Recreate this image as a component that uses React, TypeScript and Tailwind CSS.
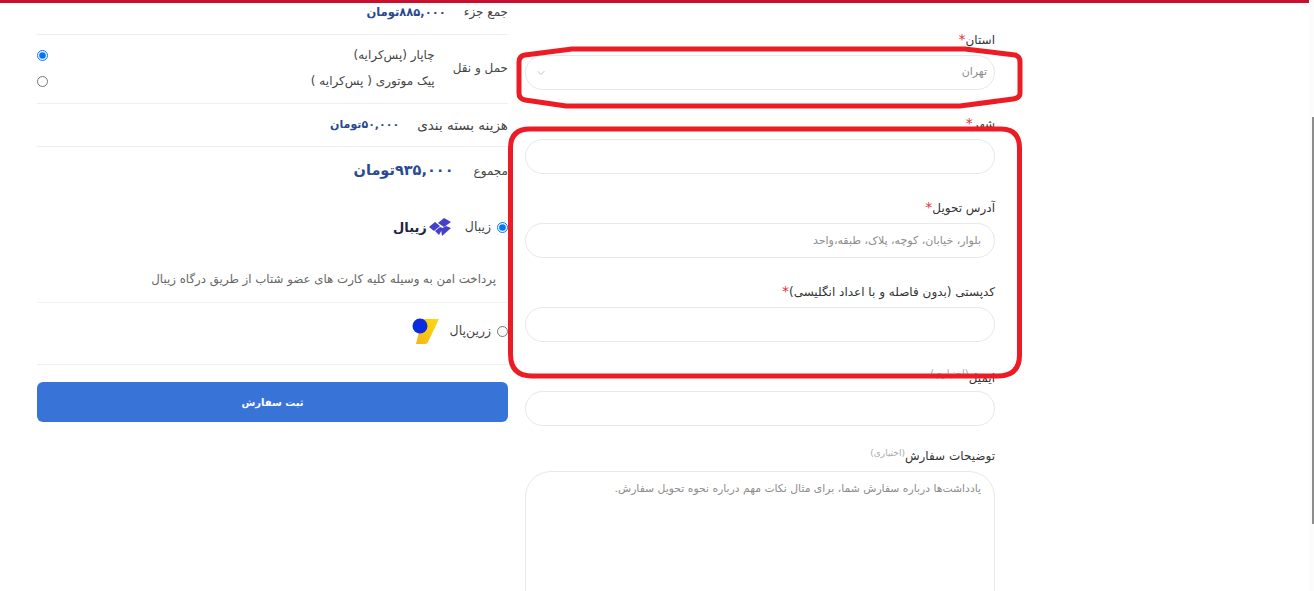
import React from 'react';
import { ChevronDown } from 'lucide-react';

const fontStack = { fontFamily: '"DejaVu Sans", "Noto Sans", sans-serif' };

const Req = () => <span className="text-[#d9343f] text-[14px] leading-none">*</span>;

const Field: React.FC<{ label: React.ReactNode; placeholder?: string; gap?: string }> = ({ label, placeholder, gap = 'mb-[24px]' }) => (
  <div className={gap}>
    <label className="block h-[25px] text-[12px] leading-[20px] text-[#333]">{label}</label>
    <input
      readOnly
      placeholder={placeholder}
      className="block h-[35px] w-full rounded-full border border-[#e8e8e8] bg-white pl-4 pr-[13px] text-[11px] outline-none placeholder:text-[#8c8c8c]"
    />
  </div>
);

const ZibalLogo = () => (
  <div className="flex items-center gap-[1px]">
    <svg width="24" height="20" viewBox="0 0 24 20" className="block">
      <g fill="#4340c9">
        <path d="M10 6 L16 1 L23 5 L16 10 Z" />
        <path d="M1 10 L7 5 L12 9 L6 14 Z" />
        <path d="M13 12 L18 9 L23 11 L14 19 Z" />
        <path d="M7 14 L12 10 L15 11 L11 18 Z" />
      </g>
    </svg>
    <span className="text-[13px] font-bold leading-none text-[#1c2540]">زیبال</span>
  </div>
);

const ZarinLogo = () => (
  <svg width="28" height="27" viewBox="0 0 28 27" className="block">
    <defs>
      <linearGradient id="zarin" x1="0" y1="1" x2="1" y2="0">
        <stop offset="0" stopColor="#f3b61c" />
        <stop offset="1" stopColor="#ffd90f" />
      </linearGradient>
    </defs>
    <path d="M10 1 H27 L16 24 Q15.500 26 13 26 H4 Z" fill="url(#zarin)" />
    <circle cx="8" cy="8" r="7.500" fill="#0a2be0" />
  </svg>
);

export default function App() {
  return (
    <div className="flex h-[591px] w-[1314px] overflow-hidden bg-white relative" style={fontStack}>
      <main dir="rtl" className="w-[1309px]">
        <div className="h-[3px] bg-[#c8102e]" />
        <div className="flex gap-[17px] pr-[314px] pl-[37px]">
          {/* Checkout form */}
          <div className="w-[470px] shrink-0 pt-[27px]">
            <div className="mb-[24px]">
              <label className="block h-[25px] text-[12px] leading-[20px] text-[#333]">استان<Req /></label>
              <div className="flex h-[35px] items-center justify-between rounded-full border border-[#e8e8e8] pl-[9px] pr-[7px] text-[11px] text-[#8c8c8c]">
                <span>تهران</span>
                <ChevronDown className="h-3 w-3 text-[#aaa]" strokeWidth={1.5} />
              </div>
            </div>
            <Field label={<>شهر<Req /></>} />
            <Field label={<>آدرس تحویل<Req /></>} placeholder="بلوار، خیابان، کوچه، پلاک، طبقه،واحد" />
            <Field label={<>کدپستی (بدون فاصله و با اعداد انگلیسی)<Req /></>} />
            <Field label={<span className="block pt-[2px]">ایمیل<sup className="text-[10px] text-[#aaa]">(اختیاری)</sup></span>} gap="mb-[20px]" />
            <label className="block h-[25px] text-[12px] leading-[20px] text-[#333]">
              توضیحات سفارش<sup className="text-[9px] text-[#aaa]">(اختیاری)</sup>
            </label>
            <textarea
              readOnly
              placeholder="یادداشت‌ها درباره سفارش شما، برای مثال نکات مهم درباره نحوه تحویل سفارش."
              className="block h-[200px] w-full resize-none rounded-[26px] border border-[#e8e8e8] px-[13px] py-[9px] text-[10.800px] outline-none placeholder:text-[#8c8c8c]"
            />
          </div>

          {/* Order summary */}
          <div className="w-[471px] shrink-0 text-[12px] text-[#444]">
            <div className="flex h-[32px] gap-[18px] border-b border-[#eee] pb-3">
              <span className="leading-[18px]">جمع جزء</span>
              <span className="text-[11.500px] font-bold leading-[18px] text-[#2a4a8f]">۸۸۵,۰۰۰تومان</span>
            </div>
            <div className="flex h-[69px] items-center gap-[18px] border-b border-[#eee]">
              <span className="pb-[2px]">حمل و نقل</span>
              <div className="flex-1 pb-[2px]">
                <div className="flex h-[26px] items-center justify-between">
                  <span>چاپار (پس‌کرایه)</span>
                  <input type="radio" name="ship" defaultChecked className="m-0 h-[11px] w-[11px]" />
                </div>
                <div className="flex h-[26px] items-center justify-between">
                  <span>پیک موتوری ( پس‌کرایه )</span>
                  <input type="radio" name="ship" className="m-0 h-[11px] w-[11px]" />
                </div>
              </div>
            </div>
            <div className="flex h-[43px] items-center gap-[18px] border-b border-[#eee]">
              <span className="text-[13.500px]">هزینه بسته بندی</span>
              <span className="text-[11px] font-bold text-[#2a4a8f]">۵۰,۰۰۰تومان</span>
            </div>
            <div className="flex h-[48px] items-center gap-[20px]">
              <span>مجموع</span>
              <span className="text-[14.500px] font-bold text-[#2a4a8f]">۹۳۵,۰۰۰تومان</span>
            </div>
            <div className="mt-[20px] flex h-[24px] items-center gap-[13px]">
              <div className="flex items-center gap-[6px]">
                <input type="radio" name="pay" defaultChecked className="m-0 h-[11px] w-[11px]" />
                <span className="text-[12.500px]">زیبال</span>
              </div>
              <ZibalLogo />
            </div>
            <div className="flex h-[64px] items-end border-b border-[#f3f3f3] pb-[13px] pr-[12px] text-[11.800px] text-[#666]">
              پرداخت امن به وسیله کلیه کارت های عضو شتاب از طریق درگاه زیبال
            </div>
            <div className="flex h-[62px] items-center gap-[10px] border-b border-[#eee] pb-[5px]">
              <div className="flex items-center gap-[6px]">
                <input type="radio" name="pay" className="m-0 h-[11px] w-[11px]" />
                <span className="text-[12.500px]">زرین‌پال</span>
              </div>
              <ZarinLogo />
            </div>
            <button className="mt-[17px] h-[40px] w-full rounded-md bg-[#3874d8] text-[10px] font-bold text-white">ثبت سفارش</button>
          </div>
        </div>
      </main>

      <aside className="w-[5px] bg-[#fcfcfc] pt-[117px] pl-[3px]">
        <div className="h-[407px] w-[2px] bg-[#8d8d8d]" />
      </aside>

      {/* Hand-drawn review marks on the screenshot */}
      <svg className="pointer-events-none absolute left-0 top-0" width="1314" height="591" fill="none" stroke="#ed1c24" strokeWidth="5">
        <path d="M572 49 H965 L1015 55 Q1020 56 1020 62 V93 Q1020 98 1013 99 L960 106 H566 L525 100 Q519 99 519 93 V62 Q519 56 525 55 Z" />
        <path d="M530 129 H1001 Q1019.500 129 1019.500 148 V355 Q1019.500 376 998 376 H532 Q510.500 376 510.500 354 V148 Q510.500 129 530 129 Z" />
      </svg>
    </div>
  );
}
